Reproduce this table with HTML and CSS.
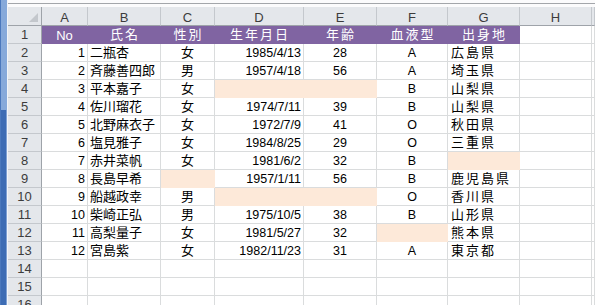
FILE: index.html
```html
<!DOCTYPE html>
<html lang="ja">
<head>
<meta charset="utf-8">
<title>Sheet</title>
<link rel="stylesheet" href="styles.css">
</head>
<body>
<div class="window">
  <div class="strip"><div class="strip-top"></div><div class="strip-low"></div></div>
  <div class="main">
    <div class="topbar"><div class="topline"></div></div>
    <div class="sheet">
      <div class="cn"><svg width="9" height="9" viewBox="0 0 9 9"><polygon points="9,0 9,9 0,9" fill="#c3c7cc"/></svg></div>
      <div class="ch">A</div><div class="ch">B</div><div class="ch">C</div><div class="ch">D</div><div class="ch">E</div><div class="ch">F</div><div class="ch">G</div><div class="ch">H</div><div class="ch"></div>

      <div class="rh">1</div>
      <div class="c p n ctr">No</div><div class="c p j hd">氏名</div><div class="c p j hd">性別</div><div class="c p j hd">生年月日</div><div class="c p j hd">年齢</div><div class="c p j hd">血液型</div><div class="c p j hd">出身地</div><div class="c"></div><div class="c"></div>

      <div class="rh">2</div>
      <div class="c n r">1</div><div class="c j l">二瓶杏</div><div class="c j ctr">女</div><div class="c n r">1985/4/13</div><div class="c n ctr">28</div><div class="c n ctr">A</div><div class="c j pref">広島県</div><div class="c"></div><div class="c"></div>

      <div class="rh">3</div>
      <div class="c n r">2</div><div class="c j l">斉藤善四郎</div><div class="c j ctr">男</div><div class="c n r">1957/4/18</div><div class="c n ctr">56</div><div class="c n ctr">A</div><div class="c j pref">埼玉県</div><div class="c"></div><div class="c"></div>

      <div class="rh">4</div>
      <div class="c n r">3</div><div class="c j l">平本嘉子</div><div class="c j ctr">女</div><div class="c f"></div><div class="c f"></div><div class="c n ctr">B</div><div class="c j pref">山梨県</div><div class="c"></div><div class="c"></div>

      <div class="rh">5</div>
      <div class="c n r">4</div><div class="c j l">佐川瑠花</div><div class="c j ctr">女</div><div class="c n r">1974/7/11</div><div class="c n ctr">39</div><div class="c n ctr">B</div><div class="c j pref">山梨県</div><div class="c"></div><div class="c"></div>

      <div class="rh">6</div>
      <div class="c n r">5</div><div class="c j l">北野麻衣子</div><div class="c j ctr">女</div><div class="c n r">1972/7/9</div><div class="c n ctr">41</div><div class="c n ctr">O</div><div class="c j pref">秋田県</div><div class="c"></div><div class="c"></div>

      <div class="rh">7</div>
      <div class="c n r">6</div><div class="c j l">塩見雅子</div><div class="c j ctr">女</div><div class="c n r">1984/8/25</div><div class="c n ctr">29</div><div class="c n ctr">O</div><div class="c j pref">三重県</div><div class="c"></div><div class="c"></div>

      <div class="rh">8</div>
      <div class="c n r">7</div><div class="c j l">赤井菜帆</div><div class="c j ctr">女</div><div class="c n r">1981/6/2</div><div class="c n ctr">32</div><div class="c n ctr">B</div><div class="c f"></div><div class="c"></div><div class="c"></div>

      <div class="rh">9</div>
      <div class="c n r">8</div><div class="c j l">長島早希</div><div class="c f"></div><div class="c n r">1957/1/11</div><div class="c n ctr">56</div><div class="c n ctr">B</div><div class="c j pref">鹿児島県</div><div class="c"></div><div class="c"></div>

      <div class="rh">10</div>
      <div class="c n r">9</div><div class="c j l">船越政幸</div><div class="c j ctr">男</div><div class="c f"></div><div class="c f"></div><div class="c n ctr">O</div><div class="c j pref">香川県</div><div class="c"></div><div class="c"></div>

      <div class="rh">11</div>
      <div class="c n r">10</div><div class="c j l">柴崎正弘</div><div class="c j ctr">男</div><div class="c n r">1975/10/5</div><div class="c n ctr">38</div><div class="c n ctr">B</div><div class="c j pref">山形県</div><div class="c"></div><div class="c"></div>

      <div class="rh">12</div>
      <div class="c n r">11</div><div class="c j l">高梨量子</div><div class="c j ctr">女</div><div class="c n r">1981/5/27</div><div class="c n ctr">32</div><div class="c f"></div><div class="c j pref">熊本県</div><div class="c"></div><div class="c"></div>

      <div class="rh">13</div>
      <div class="c n r">12</div><div class="c j l">宮島紫</div><div class="c j ctr">女</div><div class="c n r">1982/11/23</div><div class="c n ctr">31</div><div class="c n ctr">A</div><div class="c j pref">東京都</div><div class="c"></div><div class="c"></div>

      <div class="rh">14</div>
      <div class="c"></div><div class="c"></div><div class="c"></div><div class="c"></div><div class="c"></div><div class="c"></div><div class="c"></div><div class="c"></div><div class="c"></div>

      <div class="rh">15</div>
      <div class="c"></div><div class="c"></div><div class="c"></div><div class="c"></div><div class="c"></div><div class="c"></div><div class="c"></div><div class="c"></div><div class="c"></div>

      <div class="rh">16</div>
      <div class="c"></div><div class="c"></div><div class="c"></div><div class="c"></div><div class="c"></div><div class="c"></div><div class="c"></div><div class="c"></div><div class="c"></div>
    </div>
  </div>
</div>
</body>
</html>
```

FILE: styles.css
```css
html, body {
  margin: 0;
  padding: 0;
  background: #ffffff;
}
body {
  width: 595px;
  height: 305px;
  overflow: hidden;
}
.window {
  display: flex;
  width: 595px;
  height: 305px;
  overflow: hidden;
}
.strip {
  width: 7px;
  flex: none;
  display: flex;
  flex-direction: column;
  background: #4a78bd;
  border-right: 1px solid #f2f5f9;
  box-sizing: content-box;
}
.strip-top {
  height: 110px;
  margin-left: 1px;
  background: #86a9da;
}
.strip-low {
  flex: 1;
  margin-left: 1px;
  background: #3d6cb4;
  border-right: 1px solid #7d9fd2;
}
.main {
  flex: 1;
  display: flex;
  flex-direction: column;
  min-width: 0;
}
.topbar {
  height: 7px;
  flex: none;
  box-sizing: border-box;
  padding-top: 3px;
  background: #fbfbfc;
}
.topline {
  border-top: 1px solid #a3a6aa;
}
.sheet {
  display: grid;
  grid-template-columns: 34px 46px 73px 54px 89px 73px 71px 72px 72px 1fr;
  grid-template-rows: 19px repeat(16, 18px);
}
.sheet > div {
  box-sizing: border-box;
  overflow: visible;
  white-space: nowrap;
}
.cn {
  background: #e4e7eb;
  border-right: 1px solid #9ea3a9;
  border-bottom: 1px solid #9ea3a9;
  display: flex;
  justify-content: flex-end;
  align-items: flex-end;
  padding: 0 3px 3px 0;
}
.cn svg {
  display: block;
}
.ch {
  background: #e4e7eb;
  border-right: 1px solid #c4c8cd;
  border-bottom: 1px solid #9ea3a9;
  font-family: "Liberation Sans", Arial, sans-serif;
  font-size: 13px;
  color: #3c3c3c;
  text-align: center;
  line-height: 17px;
  padding-top: 2px;
}
.rh {
  background: #e4e7eb;
  border-right: 1px solid #9ea3a9;
  border-bottom: 1px solid #c4c8cd;
  font-family: "Liberation Sans", Arial, sans-serif;
  font-size: 13px;
  color: #3c3c3c;
  text-align: center;
  line-height: 17px;
}
.c {
  border-right: 1px solid #dadcdd;
  border-bottom: 1px solid #dadcdd;
  color: #000000;
}
.n {
  font-family: "Liberation Sans", Arial, sans-serif;
  font-size: 12.5px;
  line-height: 17px;
  padding-top: 1px;
}
.j {
  font-family: "Noto Sans CJK JP", "Noto Sans CJK SC", sans-serif;
  font-size: 13px;
  line-height: 15px;
}
.r {
  text-align: right;
  padding-right: 2px;
}
.l {
  text-align: left;
  padding-left: 2px;
}
.ctr {
  text-align: center;
}
.pref {
  text-align: left;
  padding-left: 3px;
  letter-spacing: 2px;
}
.hd {
  text-align: center;
  letter-spacing: 2px;
  padding-left: 2px;
}
.p {
  background: #8064a2;
  border-right-color: #8064a2;
  border-bottom-color: #8064a2;
  color: #ffffff;
  font-size: 13px;
}
.f {
  background: #fde9d9;
  border-right-color: #fde9d9;
  border-bottom-color: #fde9d9;
}
```
